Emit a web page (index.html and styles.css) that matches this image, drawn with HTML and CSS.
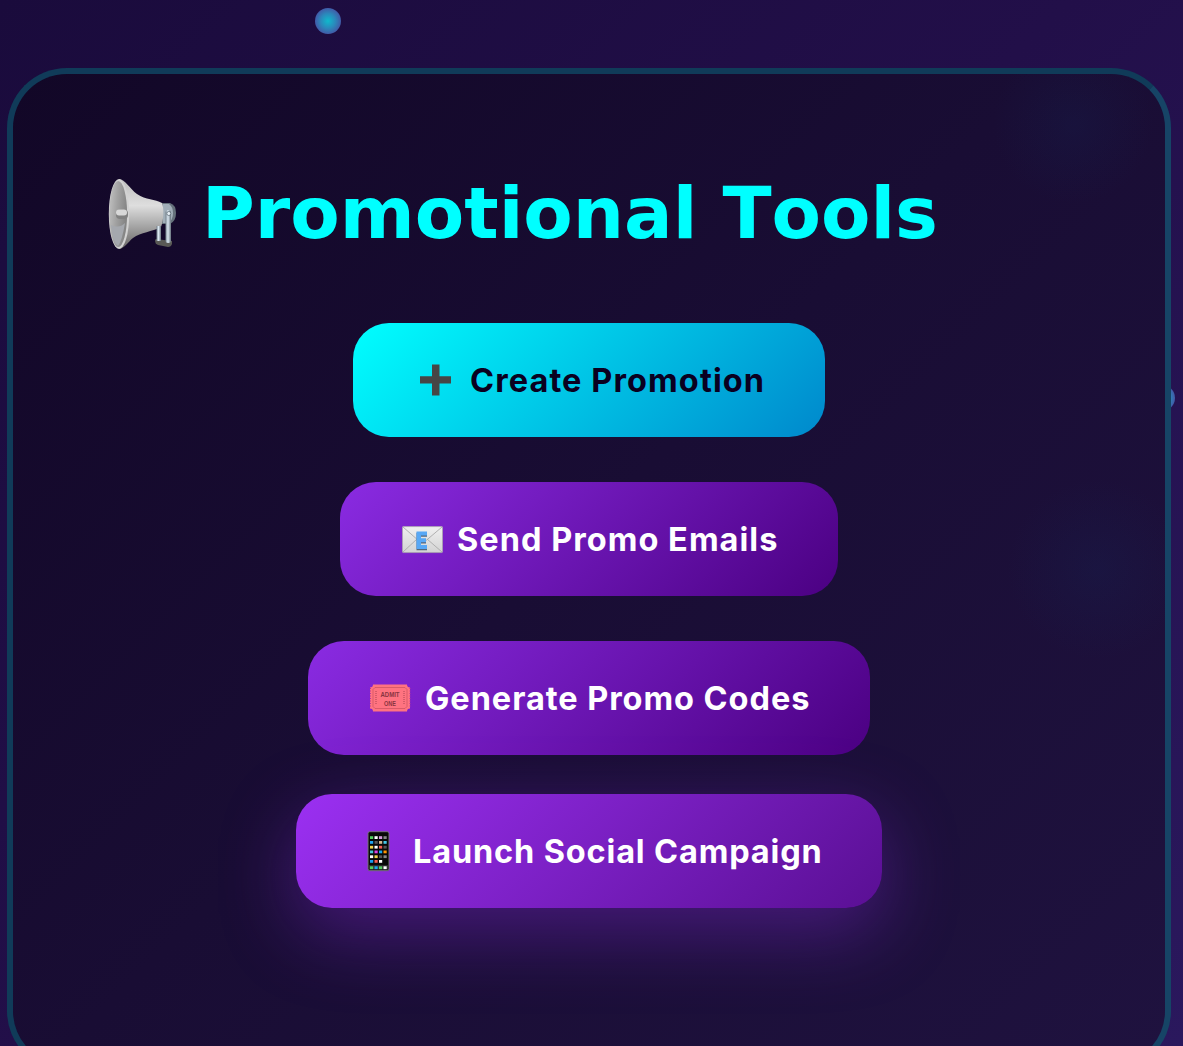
FILE: index.html
```html
<!DOCTYPE html>
<html lang="en">
<head>
<meta charset="utf-8">
<title>Promotional Tools</title>
<link rel="stylesheet" href="styles.css">
</head>
<body>
<span class="particle particle-top"></span>
<span class="particle particle-side"></span>
<main class="card">
  <h1 class="title">
    <svg class="title-icon" viewBox="0 0 72 72" aria-hidden="true">
      <defs>
        <linearGradient id="horn" x1="0" y1="0" x2="0" y2="1"><stop offset="0" stop-color="#bdbdbd"/><stop offset=".38" stop-color="#dedede"/><stop offset=".65" stop-color="#aaa"/><stop offset="1" stop-color="#676564"/></linearGradient>
        <linearGradient id="bell" x1="0" y1="0" x2="1" y2=".3"><stop offset="0" stop-color="#c4c4c4"/><stop offset=".5" stop-color="#a2a2a2"/><stop offset="1" stop-color="#858585"/></linearGradient>
        <linearGradient id="metal" x1="0" y1="0" x2="1" y2="0"><stop offset="0" stop-color="#78858f"/><stop offset=".45" stop-color="#dbe8f2"/><stop offset="1" stop-color="#65717b"/></linearGradient>
      </defs>
      <path d="M53 25h9q6 2 6 10t-6 11h-9z" fill="#65717b"/>
      <path d="M55 26h6q4 3 4 9t-4 10h-6z" fill="#a1aeb8"/>
      <path d="M48 61l16 2v3q-1 3-4 3l-10-2q-3-1-3-5z" fill="#595955"/>
      <path d="M11 1c6 0 11 10 18 15 9 6 18 5 25 9 2 5 2 16-1 24-9 5-20 5-28 11-5 4-9 11-14 11z" fill="url(#horn)"/>
      <rect x="48.500" y="48" width="4.500" height="15" fill="url(#metal)"/>
      <rect x="57.500" y="32" width="5.500" height="33" rx="2.500" fill="url(#metal)"/>
      <circle cx="60.800" cy="35.500" r="2" fill="#e8f1f7" stroke="#53606a" stroke-width=".7"/>
      <ellipse cx="11" cy="36" rx="10.200" ry="35" fill="#d2d2d2"/>
      <ellipse cx="10.200" cy="36" rx="8.900" ry="33" fill="url(#bell)"/>
      <path d="M3 47q8 4 14-2-3 18-7 23-5-3-7-21z" fill="#a5a8ae"/>
      <rect x="8" y="31.500" width="12" height="9.500" rx="4" fill="#818181"/>
      <rect x="8" y="31.500" width="11" height="6" rx="3" fill="#d8d8d8"/>
    </svg>
    <span class="title-text">Promotional Tools</span>
  </h1>
  <div class="actions">
    <button class="btn btn-primary">
      <svg class="icon" viewBox="0 0 42 42" aria-hidden="true"><path d="M19 4.600h7.500v11.700H38v7.200H26.500V35.500H19V23.500H7v-7.200h12z" fill="#464646"/></svg>
      <span>Create Promotion</span>
    </button>
    <button class="btn btn-email">
      <svg class="icon" viewBox="0 0 42 42" aria-hidden="true">
        <defs><linearGradient id="paper" x1="0" y1="0" x2="0" y2="1"><stop offset="0" stop-color="#f0f0f0"/><stop offset="1" stop-color="#d3d3d3"/></linearGradient></defs>
        <rect x="2.500" y="7.600" width="40" height="26" rx=".8" fill="url(#paper)" stroke="#aaa" stroke-width=".7"/>
        <path d="M3 8l16 14q3 3 6.500 0L42 8M3 33l14-13M42 33L27 20" fill="none" stroke="#aaa" stroke-width=".9"/>
        <path d="M16.500 13.800h10.500v4H21v2.700h5v4h-5v2.800h6v4H16.500z" fill="#53677c"/>
        <path d="M16.500 12.500h10.500v4H21v2.700h5v4h-5V26h6v4H16.500z" fill="#58a8f5"/>
      </svg>
      <span>Send Promo Emails</span>
    </button>
    <button class="btn btn-codes">
      <svg class="icon" viewBox="0 0 42 42" aria-hidden="true">
        <path d="M5 6.500h34q0 3 3 3v21q-3 0-3 3H5q0-3-3-3v-21q3 0 3-3z" fill="#ff7380"/>
        <path d="M2.500 10v20M42 10v20" stroke="#b43a9a" stroke-width="1" stroke-dasharray="1 1.500"/>
        <path d="M7 9.500h30l2 2v17l-2 2H7l-2-2v-17z" fill="none" stroke="#cc505e" stroke-width=".7"/>
        <path d="M8 13v14M36 13v14" stroke="#d55b69" stroke-width="2" stroke-dasharray="1 1"/>
        <text class="ticket-text" x="12.500" y="18.500" textLength="19" lengthAdjust="spacingAndGlyphs">ADMIT</text>
        <text class="ticket-text" x="16" y="27.500" textLength="12" lengthAdjust="spacingAndGlyphs">ONE</text>
      </svg>
      <span>Generate Promo Codes</span>
    </button>
    <button class="btn btn-active">
      <svg class="icon" viewBox="0 0 42 42" aria-hidden="true">
        <rect x="12" y=".7" width="21" height="39" rx="1.800" fill="#080808" stroke="#77717b"/>
        <rect x="13" y="34.200" width="19" height="4.500" fill="#333"/>
        <g stroke-width="2.800">
          <path d="M14 6.600h3.200" stroke="#52cf5e"/><path d="M18.500 6.600h3.200" stroke="#fff"/><path d="M23 6.600h3.200" stroke="#d798de"/><path d="M27.500 6.600h3.200" stroke="#888"/>
          <path d="M14 11.400h3.200" stroke="#20a7f2"/><path d="M18.500 11.400h3.200" stroke="#555"/><path d="M23 11.400h3.200" stroke="#d2b890"/><path d="M27.500 11.400h3.200" stroke="#45c7e7"/>
          <path d="M14 16.200h3.200" stroke="#f3d34e"/><path d="M18.500 16.200h3.200" stroke="#fff"/><path d="M23 16.200h3.200" stroke="#f75b52"/><path d="M27.500 16.200h3.200" stroke="#555"/>
          <path d="M14 20.900h3.200" stroke="#45c7d7"/><path d="M18.500 20.900h3.200" stroke="#d945e8"/><path d="M23 20.900h3.200" stroke="#16a9f1"/><path d="M27.500 20.900h3.200" stroke="#ff9500"/>
          <path d="M14 25.700h3.200" stroke="#fff"/><path d="M18.500 25.700h3.200" stroke="#f3d34e"/><path d="M23 25.700h3.200" stroke="#555"/><path d="M27.500 25.700h3.200" stroke="#888"/>
          <path d="M14 30.400h3.200" stroke="#1a9cf2"/><path d="M18.500 30.400h3.200" stroke="#f75b52"/><path d="M23 30.400h3.200" stroke="#fff"/>
          <path d="M14 36.700h3.200" stroke="#52cf5e"/><path d="M18.500 36.700h3.200" stroke="#1aa7f2"/><path d="M23 36.700h3.200" stroke="#52cf5e"/><path d="M27.500 36.700h3.200" stroke="#fff"/>
        </g>
      </svg>
      <span>Launch Social Campaign</span>
    </button>
  </div>
</main>
</body>
</html>
```
FILE: styles.css
```css
* { box-sizing: border-box; }
html { height: 100%; overflow: hidden; }
body {
  height: 1046px;
  margin: 0;
  padding: 68px 12px 0 7px;
  overflow: hidden;
  position: relative;
  background: linear-gradient(135deg, #1a0b3c 0%, #220f49 48%, #2a185d 100%);
  font-family: Inter, "Liberation Sans", sans-serif;
}
.particle {
  position: absolute;
  width: 26px;
  height: 26px;
  border-radius: 50%;
  background: radial-gradient(circle, #0fb9cc 0%, #2b88bb 40%, #4454a5 75%);
}
.particle-top { left: 315px; top: 8px; }
.particle-side { left: 1149px; top: 385px; }
.card {
  position: relative;
  height: 1003px;
  padding: 90px;
  border: 6px solid;
  border-color: #103b59 #164466 #164466 #103b59;
  border-radius: 60px;
  background:
    radial-gradient(circle at 1085px 495px, rgba(20, 40, 90, .22), transparent 90px),
    radial-gradient(circle at 1060px 50px, rgba(20, 40, 90, .2), transparent 80px),
    linear-gradient(135deg, #120727 0%, #190d34 48%, #1f123f 100%);
}
.title {
  display: flex;
  align-items: center;
  height: 100px;
  margin: 0;
  padding-left: 5px;
  gap: 22px;
  color: #0ff;
  font: 700 72px/100px "DejaVu Sans", Verdana, sans-serif;
  font-kerning: none;
  white-space: nowrap;
}
.title-icon { width: 72px; height: 72px; flex: none; }
.title-text { padding-bottom: 2px; }
.actions {
  display: flex;
  flex-direction: column;
  align-items: center;
  gap: 45px;
  margin-top: 59px;
}
.btn {
  display: flex;
  align-items: center;
  height: 114px;
  padding: 1px 60px 0;
  gap: 15px;
  border: 0;
  border-radius: 36px;
  background: linear-gradient(135deg, #8a2be2, #4b0082);
  color: #fff;
  font: 700 32.5px/42px Inter, "Liberation Sans", sans-serif;
  white-space: nowrap;
}
.icon { width: 42px; height: 42px; flex: none; overflow: visible; }
.btn-primary {
  width: 472px;
  background: linear-gradient(135deg, #0ff, #0088cc);
  color: #0a0020;
  letter-spacing: 1.1px;
}
.btn-email { width: 498px; letter-spacing: 1.03px; }
.btn-codes { width: 562px; letter-spacing: .95px; }
.btn-active {
  width: 586px;
  margin-top: -6px;
  background: linear-gradient(135deg, #9b30f2, #5a0f94);
  box-shadow: 0 24px 75px rgba(138, 43, 226, .4);
  letter-spacing: .84px;
}
.ticket-text { font: 700 8px "Liberation Sans", sans-serif; letter-spacing: 0; fill: #8a3440; }
```
